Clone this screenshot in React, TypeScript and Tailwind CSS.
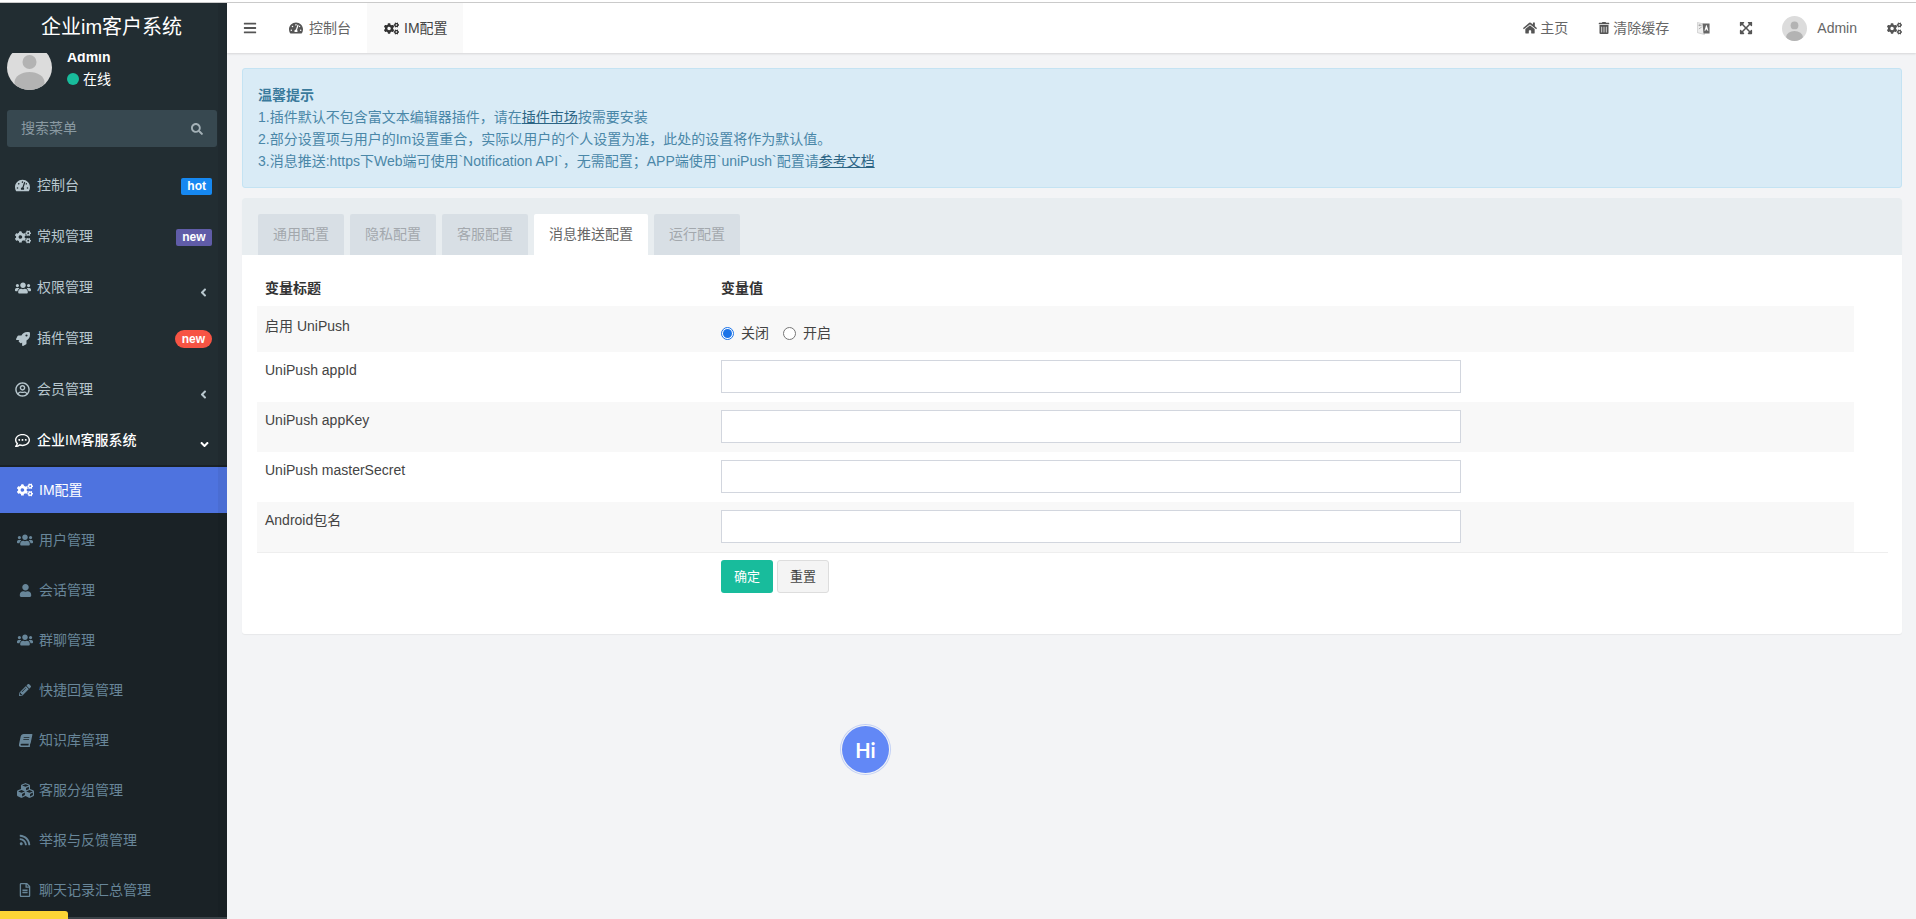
import { FaAngleDown, FaAngleLeft, FaBars, FaBook, FaCogs, FaCubes, FaExpandArrowsAlt, FaHome, FaPencilAlt, FaRegCommentDots, FaRegFileAlt, FaRegUserCircle, FaRocket, FaRss, FaSearch, FaTachometerAlt, FaTrashAlt, FaUser, FaUsers } from "react-icons/fa";
import type { IconType } from "react-icons";

type TopItem = { label: string; icon: IconType; size: string; badge?: "hot" | "new" | "newRed"; arrow?: boolean };

const topItems: TopItem[] = [
  { label: "控制台", icon: FaTachometerAlt, size: "text-[15px]", badge: "hot" },
  { label: "常规管理", icon: FaCogs, size: "text-[16px]", badge: "new" },
  { label: "权限管理", icon: FaUsers, size: "text-[16px]", arrow: true },
  { label: "插件管理", icon: FaRocket, size: "text-[14px]", badge: "newRed" },
  { label: "会员管理", icon: FaRegUserCircle, size: "text-[15px]", arrow: true },
];

const subItems: { label: string; icon: IconType; size: string }[] = [
  { label: "用户管理", icon: FaUsers, size: "text-[16px]" },
  { label: "会话管理", icon: FaUser, size: "text-[13px]" },
  { label: "群聊管理", icon: FaUsers, size: "text-[16px]" },
  { label: "快捷回复管理", icon: FaPencilAlt, size: "text-[12px]" },
  { label: "知识库管理", icon: FaBook, size: "text-[13px] -skew-x-12" },
  { label: "客服分组管理", icon: FaCubes, size: "text-[17px]" },
  { label: "举报与反馈管理", icon: FaRss, size: "text-[12px]" },
  { label: "聊天记录汇总管理", icon: FaRegFileAlt, size: "text-[14px]" },
];

const tabs = ["通用配置", "隐私配置", "客服配置", "消息推送配置", "运行配置"];

const fields = [
  { label: "UniPush appId", striped: false },
  { label: "UniPush appKey", striped: true },
  { label: "UniPush masterSecret", striped: false },
  { label: "Android包名", striped: true },
];

function Avatar({ className }: { className: string }) {
  return (
    <svg viewBox="0 0 45 45" className={className}>
      <clipPath id="avatar-clip">
        <circle cx="22.5" cy="22.5" r="22.5" />
      </clipPath>
      <g clipPath="url(#avatar-clip)">
        <rect width="45" height="45" fill="#dcdcdc" />
        <circle cx="22.5" cy="17" r="7" fill="#b3b3b3" />
        <ellipse cx="22.5" cy="37.5" rx="15" ry="10.5" fill="#b3b3b3" />
      </g>
    </svg>
  );
}

function Badge({ kind }: { kind: "hot" | "new" | "newRed" }) {
  if (kind === "hot") {
    return <span className="rounded-[2px] bg-[#1688f1] px-[6px] text-[12px] leading-[17px] font-bold text-white">hot</span>;
  }
  if (kind === "new") {
    return <span className="rounded-[2px] bg-[#605ca8] px-[6.5px] text-[12px] leading-[17px] font-bold text-white">new</span>;
  }
  return <span className="rounded-full bg-[#f75444] px-[7px] text-[12px] leading-[18px] font-bold text-white">new</span>;
}

function Sidebar() {
  return (
    <aside className="relative flex w-[227px] shrink-0 flex-col overflow-hidden bg-[#222d32]">
      <div className="relative z-10 h-[50px] shrink-0 bg-[#222d32] pr-[4px] text-center text-[20px] leading-[48px] text-white">企业im客户系统</div>

      <div className="-mt-[8px] flex h-[65px] shrink-0 pl-[7px]">
        <Avatar className="h-[45px] w-[45px] shrink-0" />
        <div className="ml-[15px] text-[14px] text-white">
          <div className="mt-[2px] leading-[20px] font-bold">Admin</div>
          <div className="mt-[2px] flex items-center leading-[20px]">
            <span className="mr-[4px] h-[12px] w-[12px] rounded-full bg-[#18bc9c]" />
            在线
          </div>
        </div>
      </div>

      <div className="mr-[10px] ml-[7px] flex h-[37px] shrink-0 items-center justify-between rounded-[3px] bg-[#374850] px-[14px] text-[14px] text-[#8a9aa2]">
        <span>搜索菜单</span>
        <FaSearch className="text-[12px] text-[#a3b0b6]" />
      </div>

      <nav className="mt-[13px]">
        {topItems.map((item) => (
          <div key={item.label} className="flex h-[51px] items-center pr-[15px] pl-[15px] text-[14px] text-[#b8c7ce]">
            <span className="mr-[7px] flex w-[15px] shrink-0 justify-center">
              <item.icon className={`shrink-0 ${item.size}`} />
            </span>
            <span>{item.label}</span>
            {item.badge && (
              <span className="mt-[1px] ml-auto flex">
                <Badge kind={item.badge} />
              </span>
            )}
            {item.arrow && <FaAngleLeft className="mt-[9px] mr-[2px] ml-auto text-[13px]" />}
          </div>
        ))}

        <div className="flex h-[50px] items-center pr-[15px] pl-[15px] text-[14px] font-medium text-white">
          <span className="mr-[7px] flex w-[15px] shrink-0 justify-center">
            <FaRegCommentDots className="shrink-0 text-[15px]" />
          </span>
          <span>企业IM客服系统</span>
          <FaAngleDown className="mt-[8px] mr-[1px] ml-auto text-[13px]" />
        </div>

        <div className="bg-[#1a2226] pt-[2px]">
          <div className="flex h-[46px] items-center bg-[#4e73df] pl-[17px] text-[14px] text-white">
            <span className="mr-[6px] flex w-[16px] shrink-0 justify-center">
              <FaCogs className="shrink-0 text-[16px]" />
            </span>
            <span>IM配置</span>
          </div>
          <div className="h-[2px]" />
          {subItems.map((item) => (
            <div key={item.label} className="flex h-[50px] items-center pl-[17px] text-[14px] text-[#688699]">
              <span className="mr-[6px] flex w-[16px] shrink-0 justify-center">
                <item.icon className={`shrink-0 ${item.size}`} />
              </span>
              <span className="whitespace-nowrap">{item.label}</span>
            </div>
          ))}
          <div className="h-[40px]" />
        </div>
      </nav>

      {/* scrollbar strip over the menu */}
      <div className="absolute top-0 right-0 bottom-0 z-20 w-[9px] bg-black/5" />
      <div className="absolute bottom-0 left-0 z-30 h-[2px] w-full bg-[#3a4247]" />
      <div className="absolute bottom-0 left-0 z-40 h-[8px] w-[68px] rounded-tr-[3px] bg-[#fcd535]" />
    </aside>
  );
}

function Navbar() {
  return (
    <header className="relative z-10 flex h-[50px] shrink-0 items-stretch bg-white text-[14px] text-[#666] shadow-[0_1px_2px_rgba(0,0,0,0.12)]">
      <div className="flex w-[62px] items-center pl-[16px] text-[#555]">
        <FaBars className="text-[14px]" />
      </div>
      <div className="flex w-[78px] items-center">
        <FaTachometerAlt className="mr-[6px] text-[14px] text-[#555]" />
        控制台
      </div>
      <div className="flex w-[96px] items-center bg-[#f9f9f9] pl-[17px] text-[#444]">
        <FaCogs className="mr-[5px] text-[15px] text-[#333]" />
        IM配置
      </div>

      <div className="ml-auto flex items-center pr-[14px]">
        <FaHome className="mr-[3px] text-[14px] text-[#555]" />
        <span>主页</span>
        <FaTrashAlt className="mr-[3px] ml-[30px] text-[12px] text-[#555]" />
        <span>清除缓存</span>
        <svg viewBox="0 0 14 15" className="ml-[28px] h-[15px] w-[13px]">
          <path d="M0.5 1 L8 3 V14 L0.5 12 Z" fill="#eee" stroke="#bbb" strokeWidth="0.6" />
          <path d="M6 2 H13.5 V13 H7 Z" fill="#666" />
          <path d="M9.8 4 L8 10 H9.1 L9.5 8.6 H10.8 L11.2 10 H12.3 L10.5 4 Z" fill="#fff" />
          <path d="M1.5 4 H5 M3 3 V5 M2 8 L5 6" stroke="#888" strokeWidth="0.7" fill="none" />
        </svg>
        <FaExpandArrowsAlt className="ml-[29px] text-[14px] text-[#555]" />
        <Avatar className="ml-[29px] h-[25px] w-[25px]" />
        <span className="ml-[10px]">Admin</span>
        <FaCogs className="ml-[30px] text-[15px] text-[#555]" />
      </div>
    </header>
  );
}

function FormTable() {
  return (
    <div className="pl-[15px] text-[14px] leading-[20px] text-[#444]">
      <div className="flex h-[51px] w-[1597px] items-end pb-[8px] font-bold text-[#333]">
        <div className="w-[464px] pl-[8px]">变量标题</div>
        <div>变量值</div>
      </div>

      <div className="flex h-[46px] w-[1597px] bg-[#f8f8f8]">
        <div className="w-[464px] pt-[10px] pl-[8px]">启用 UniPush</div>
        <div className="flex items-center pt-[8px]">
          <span className="flex h-[13px] w-[13px] items-center justify-center rounded-full border border-[#1a73e8] bg-white">
            <span className="h-[9px] w-[9px] rounded-full bg-[#1a73e8]" />
          </span>
          <span className="ml-[7px]">关闭</span>
          <span className="ml-[14px] h-[13px] w-[13px] rounded-full border border-[#767676] bg-white" />
          <span className="ml-[7px]">开启</span>
        </div>
      </div>

      {fields.map((f) => (
        <div key={f.label} className={`flex h-[50px] w-[1597px] ${f.striped ? "bg-[#f8f8f8]" : "bg-white"}`}>
          <div className="w-[464px] pt-[8px] pl-[8px]">{f.label}</div>
          <div className="pt-[8px]">
            <input className="block h-[33px] w-[740px] border border-[#d2d6de] bg-white outline-none" />
          </div>
        </div>
      ))}

      <div className="w-[1631px] border-t border-[#eee] pt-[7px]">
        <div className="ml-[464px] flex gap-[4px]">
          <button className="h-[33px] w-[52px] rounded-[3px] bg-[#18bc9c] text-[13px] text-white">确定</button>
          <button className="h-[33px] w-[52px] rounded-[3px] border border-[#ddd] bg-[#f4f4f4] text-[13px] text-[#444]">重置</button>
        </div>
      </div>
    </div>
  );
}

export default function App() {
  return (
    <div className="flex h-[919px] w-[1916px] flex-col overflow-hidden bg-white font-['Liberation_Sans','Noto_Sans_CJK_SC',sans-serif]">
      <div className="h-[3px] shrink-0 border-b border-[#ccc] bg-white" />
      <div className="flex min-h-0 flex-1">
        <Sidebar />
        <main className="relative flex min-w-0 flex-1 flex-col bg-[#f3f4f6]">
          <Navbar />
          <div className="pt-[15px] pr-[14px] pl-[15px]">
            <div className="rounded-[3px] border border-[#c4e3f3] bg-[#d9ebf6] px-[15px] py-[15px] text-[14px] leading-[22px] text-[#4a87a8]">
              <div className="font-bold text-[#3a7a9c]">温馨提示</div>
              <div>
                1.插件默认不包含富文本编辑器插件，请在<span className="text-[#2b6484] underline">插件市场</span>按需要安装
              </div>
              <div>2.部分设置项与用户的Im设置重合，实际以用户的个人设置为准，此处的设置将作为默认值。</div>
              <div>
                3.消息推送:https下Web端可使用`Notification API`，无需配置；APP端使用`uniPush`配置请<span className="text-[#2b6484] underline">参考文档</span>
              </div>
            </div>

            <div className="mt-[10px] overflow-hidden rounded-[3px] bg-white pb-[41px] shadow-[0_1px_1px_rgba(0,0,0,0.05)]">
              <div className="flex h-[57px] items-end gap-[6px] bg-[#e8edf0] pl-[16px]">
                {tabs.map((t) => (
                  <div
                    key={t}
                    className={`flex h-[41px] items-center rounded-t-[2px] px-[15px] text-[14px] ${
                      t === "消息推送配置" ? "bg-white text-[#666]" : "bg-[#d8dfe5] text-[#a3a8ad]"
                    }`}
                  >
                    {t}
                  </div>
                ))}
              </div>
              <FormTable />
            </div>
          </div>

          {/* floating chat bubble */}
          <div className="absolute top-[723px] left-[615px] flex h-[47px] w-[47px] items-center justify-center rounded-full bg-[#6288f6] font-['Lato',sans-serif] text-[20px] font-bold text-white shadow-[0_0_0_1px_#f3f4f6,0_0_0_2px_#c2d0f5]">
            Hi
          </div>
        </main>
      </div>
    </div>
  );
}
